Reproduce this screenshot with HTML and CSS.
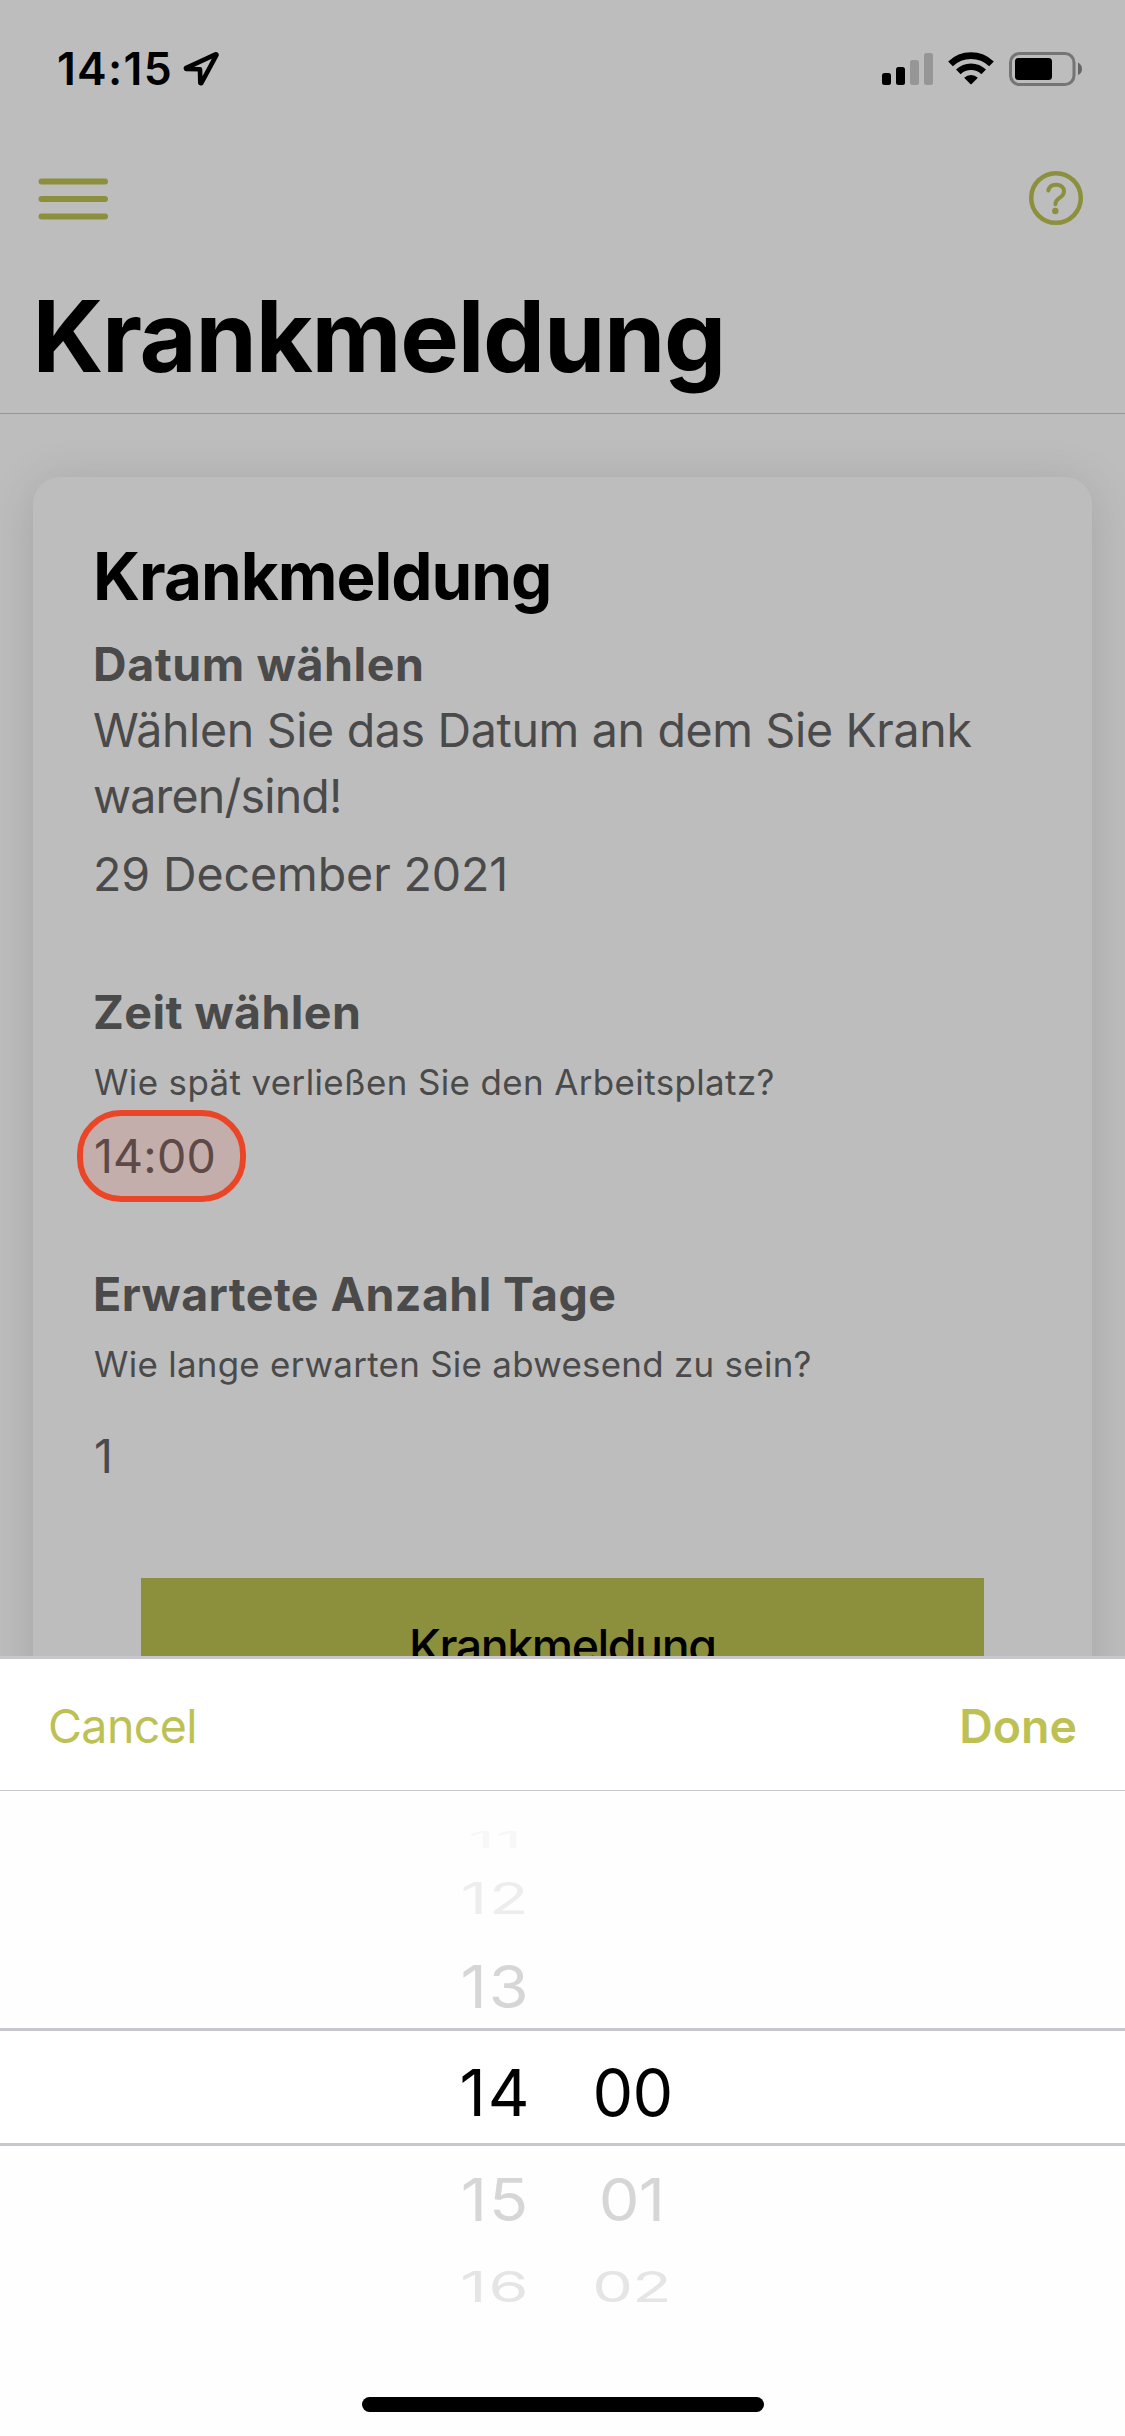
FILE: index.html
```html
<!DOCTYPE html>
<html lang="de">
<head>
<meta charset="utf-8">
<title>Krankmeldung</title>
<link rel="stylesheet" href="styles.css">
</head>
<body>
<div class="phone">
  <div class="screen">
    <div class="status-bar">
      <div class="clock">
        <span class="clock-time">14:15</span>
        <svg class="icon-location" width="36" height="38" viewBox="0 0 36 38"><path d="M32.6 4.3 3.4 17.8a.6.6 0 0 0 .3 1.2L17 19.2 17.3 32.8a.6.6 0 0 0 1.1.2L33.4 5.1a.6.6 0 0 0-.8-.8Z" fill="none" stroke="#000" stroke-width="4.6" stroke-linejoin="round"/></svg>
      </div>
      <div class="status-icons">
        <svg width="51" height="34" viewBox="0 0 51 34"><rect y="21" width="9" height="12" rx="2.5"/><rect x="14" y="15" width="9" height="18" rx="2.5"/><g fill="#969696"><rect x="28" y="8" width="9" height="25" rx="2.5"/><rect x="42" y="1" width="9" height="32" rx="2.5"/></g></svg>
        <svg class="icon-wifi" width="46" height="34" viewBox="0 0 138 102"><g fill="none" stroke="#000" stroke-width="20"><path d="M7.5 35.5A88.5 88.5 0 0 1 130.5 35.5"/><path d="M31 59.5A55 55 0 0 1 107 59.5"/></g><path d="M48.5 77A31 31 0 0 1 89.5 77L71 96Q69 98 67 96Z"/></svg>
        <svg width="73" height="34" viewBox="0 0 73 34"><rect x="1.5" y="1.5" width="63.5" height="31" rx="9" fill="none" stroke="#757575" stroke-width="3"/><rect x="6" y="6" width="37" height="22" rx="3.5"/><path d="M69 10.5Q73 12.5 73 17T69 23Z" fill="#666"/></svg>
      </div>
    </div>
    <div class="nav">
      <svg width="71" height="42" viewBox="0 0 71 42"><path d="M3.5 3.500H67M3.5 21H67M3.5 38.5H67" stroke="#8c903d" stroke-width="6" stroke-linecap="round"/></svg>
      <svg width="56" height="56" viewBox="0 0 56 56" fill="none" stroke="#8c903d"><circle cx="28" cy="28" r="24.8" stroke-width="4.5"/><path d="M20.3 20.5C21.2 16.6 24 14.8 28 14.8 32.8 14.8 36 17.6 36 21.3 36 25 33.8 26.5 31.2 28.1 28.6 29.8 27.4 31.3 27.4 34.3" stroke-width="4" stroke-linecap="round"/><circle cx="27.3" cy="41" r="3.2" fill="#8c903d" stroke="none"/></svg>
    </div>
    <h1 class="page-title">Krankmeldung</h1>
    <div class="card">
      <h2 class="card-title">Krankmeldung</h2>
      <section class="field field-date">
        <h3 class="label">Datum wählen</h3>
        <p class="text">Wählen Sie das Datum an dem Sie Krank <span class="text-end">waren/sind!</span></p>
        <p class="value date-value">29 December 2021</p>
      </section>
      <section class="field field-time">
        <h3 class="label">Zeit wählen</h3>
        <p class="hint hint-time">Wie spät verließen Sie den Arbeitsplatz?</p>
        <p class="value time-value">14:00<span class="marker"></span></p>
      </section>
      <section class="field field-days">
        <h3 class="label">Erwartete Anzahl Tage</h3>
        <p class="hint">Wie lange erwarten Sie abwesend zu sein?</p>
        <p class="value days-value">1</p>
      </section>
      <div class="submit">Krankmeldung</div>
    </div>
  </div>
  <div class="sheet">
    <div class="toolbar">
      <span class="cancel">Cancel</span>
      <span class="done">Done</span>
    </div>
    <div class="wheel">
      <div class="row row-11"><span class="hour">11</span></div>
      <div class="row row-12"><span class="hour">12</span></div>
      <div class="row row-13"><span class="hour">13</span></div>
      <div class="row row-selected"><span class="hour">14</span><span class="minute">00</span></div>
      <div class="row row-15"><span class="hour">15</span><span class="minute">01</span></div>
      <div class="row row-16"><span class="hour">16</span><span class="minute">02</span></div>
    </div>
    <div class="home-indicator"></div>
  </div>
</div>
</body>
</html>
```

FILE: styles.css
```css
* { box-sizing: border-box; }
body, h1, h2, h3, p { margin: 0; }
body { font-family: Inter, "Liberation Sans", sans-serif; background: #fff; }
svg { display: block; flex: none; }

.phone { width: 1125px; height: 2436px; display: flex; flex-direction: column; overflow: hidden; }
.screen { height: 1656px; flex: none; overflow: hidden; background: #bdbdbd; display: flex; flex-direction: column; }

.status-bar { height: 132px; flex: none; padding: 36px 43px 0 57px; display: flex; justify-content: space-between; align-items: flex-start; }
.clock { display: flex; align-items: flex-start; }
.clock-time { width: 126px; font-size: 44.5px; font-weight: 600; line-height: 66px; letter-spacing: 1.3px; }
.icon-location { margin-top: 14px; }
.status-icons { display: flex; gap: 15px; padding-top: 16px; }

.nav { height: 144px; flex: none; padding: 38px 41px 0 38px; display: flex; justify-content: space-between; align-items: flex-start; }
.nav svg:first-child { margin-top: 8px; }

.page-title { height: 138px; flex: none; padding-left: 32.5px; border-bottom: 1px solid #959597; font-size: 98.6px; font-weight: 700; line-height: 120px; letter-spacing: -1.3px; }

.card { margin: 63px 33px 0; height: 1300px; flex: none; padding: 59.5px 61px 0; border-radius: 27px; background: #bdbdbd; box-shadow: 0 6px 48px rgba(0, 0, 0, .13); color: #4a4a4a; }
.card-title { margin: 0 0 14.5px -1px; color: #000; font-size: 65.5px; font-weight: 700; line-height: 80px; letter-spacing: -1px; }
.label { margin-left: -1px; font-size: 46.5px; font-weight: 700; line-height: 66px; letter-spacing: .4px; }
.field-date .label { letter-spacing: .58px; }
.text { margin-left: -1px; font-size: 46.5px; line-height: 66px; letter-spacing: -.33px; }
.text-end { letter-spacing: -.8px; }
.value { font-size: 46.5px; line-height: 66px; }
.date-value { margin: 12px 0 0 -1px; letter-spacing: -.08px; }
.field-time { margin-top: 72px; }
.hint { margin-top: 7px; font-size: 34.9px; line-height: 60px; letter-spacing: .29px; }
.hint-time { letter-spacing: .4px; }
.time-value { position: relative; margin-top: 11px; width: max-content; letter-spacing: .2px; }
.marker { position: absolute; left: -17px; top: -13.5px; width: 169px; height: 92.5px; border: 6px solid #eb4527; border-radius: 44px; background: rgba(235, 69, 39, .12); background-clip: padding-box; }
.field-days { margin-top: 72px; }
.days-value { margin-top: 29px; }
.submit { height: 150px; margin: 89px 47.5px 0 47px; padding-top: 34.5px; background: #8c903d; color: #000; font-size: 46.5px; font-weight: 500; line-height: 66px; letter-spacing: -1.45px; text-align: center; }

.sheet { height: 780px; flex: none; display: flex; flex-direction: column; align-items: center; border-top: 3px solid #c7c6cb; background: #fefefe; }
.toolbar { width: 100%; height: 132px; flex: none; padding: 2px 48px 0 48px; display: flex; justify-content: space-between; align-items: center; border-bottom: 1px solid #c7c7cc; background: #fff; color: #bdc153; font-size: 46.5px; }
.cancel { letter-spacing: -.6px; }
.done { font-weight: 600; }

.wheel { width: 100%; height: 544px; flex: none; padding-top: 30px; }
.row { display: grid; grid-template-columns: 136px 136px; grid-template-rows: 100%; column-gap: 1px; padding-left: 427.5px; align-items: center; text-align: center; font-size: 64.6px; line-height: 1; }
.hour { letter-spacing: 2px; }
.minute { letter-spacing: -.7px; }
.row-11 { height: 39px; color: #f7f7f7; }
.row-12 { height: 76px; color: #ededed; }
.row-13 { height: 92px; padding-top: 11px; color: #d6d6d6; }
.row-selected { height: 118px; padding-top: 13px; border: solid #c7c6cb; border-width: 3px 0; background: #fff; color: #000; }
.row-15 { height: 108px; color: #d6d6d6; }
.row-16 { height: 67px; color: #e5e5e5; }
.row-11 span { transform: scaleY(.36); letter-spacing: 1px; }
.row-12 span { transform: scaleY(.68); }
.row-13 span { transform: scaleY(.92); }
.row-15 span { transform: scaleY(.91); }
.row-16 span { transform: scaleY(.66); }
.row-15 .minute, .row-16 .minute { margin-left: -2px; }

.home-indicator { width: 402px; height: 15px; margin-top: 62px; border-radius: 8px; background: #000; }
```
